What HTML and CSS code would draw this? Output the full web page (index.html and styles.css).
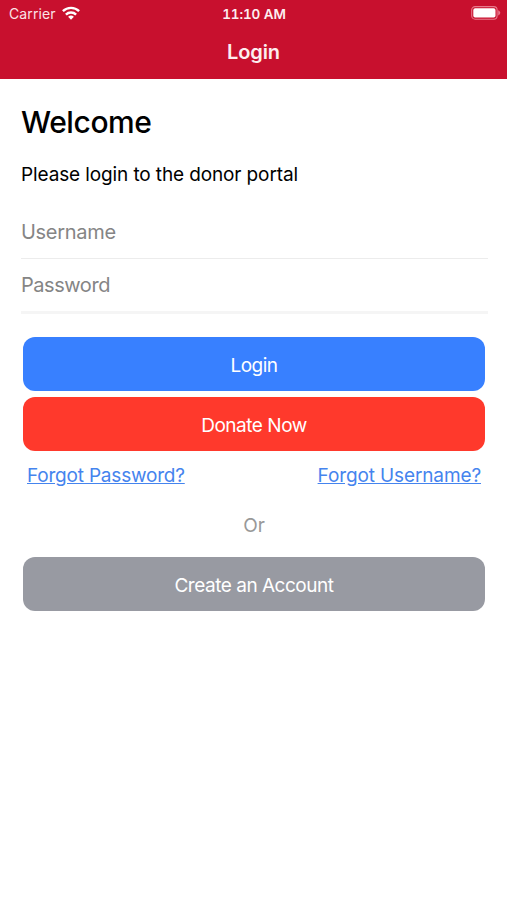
FILE: index.html
```html
<!DOCTYPE html>
<html lang="en">
<head>
<meta charset="utf-8">
<title>Login</title>
<link rel="stylesheet" href="styles.css">
</head>
<body>
<header class="top">
  <div class="status">
    <div class="carrier"><span class="carrier-name">Carrier</span>
      <svg class="wifi" viewBox="0 0 18 14" width="18" height="14"><g fill="none" stroke="#fff" stroke-width="2.4"><path d="M.9 5.2a11.6 11.6 0 0 1 16.2 0"/><path d="M3.9 8.6a7.3 7.3 0 0 1 10.2 0"/></g><path fill="#fff" d="M6.1 10.8a4.2 4.2 0 0 1 5.8 0L9 13.7z"/></svg>
    </div>
    <span class="time">11:10 AM</span>
    <svg class="battery" viewBox="0 0 30 14" width="30" height="14"><rect x=".7" y=".6" width="25.4" height="12.6" rx="3.4" fill="none" stroke="#e8798c" stroke-width="1.1"/><rect x="2.3" y="2.3" width="22.2" height="9.2" rx="1.8" fill="#fff"/><path d="M27.2 4.3c2.7 1.2 2.7 4 0 5.2z" fill="#e8798c"/></svg>
  </div>
  <div class="title"><span>Login</span></div>
</header>
<main class="content">
  <h1>Welcome</h1>
  <p class="intro">Please login to the donor portal</p>
  <div class="field"><span class="user">Username</span></div>
  <div class="field last"><span class="pass">Password</span></div>
  <div class="actions">
    <button class="btn blue">Login</button>
    <button class="btn red">Donate Now</button>
    <div class="links"><a class="l-pass">Forgot Password?</a><a class="l-user">Forgot Username?</a></div>
    <div class="or">Or</div>
    <button class="btn gray">Create an Account</button>
  </div>
</main>
</body>
</html>
```
FILE: styles.css
```css
* { box-sizing: border-box; }
body { margin: 0; background: #fff; color: #000; font-family: Inter, "Liberation Sans", sans-serif; font-size: 19px; }
.top { height: 79px; background: #c8102e; color: #fff; }
.status { height: 27px; padding: 0 6px 0 9px; display: grid; grid-template-columns: 1fr auto 1fr; align-items: center; font-size: 14px; }
.carrier { display: flex; align-items: center; gap: 6px; }
.carrier-name { letter-spacing: .1px; color: #fbe3e7; }
.wifi { position: relative; top: -1px; }
.time { margin-right: 2px; font-weight: 600; font-size: 13.5px; letter-spacing: -.1px; font-feature-settings: "tnum"; color: #fdeef0; }
.battery { justify-self: end; position: relative; top: -.5px; }
.title { height: 50px; line-height: 51px; text-align: center; font-size: 20px; font-weight: 600; letter-spacing: -.1px; color: #fdeef0; }
.content { padding: 23px 19px 0 21px; }
h1 { margin: 0; height: 40px; line-height: 40px; font-size: 30px; font-weight: 500; letter-spacing: -.42px; }
.intro { margin: 22px 0 20px; height: 22px; line-height: 22px; letter-spacing: -.12px; }
.field { height: 53px; line-height: 53px; border-bottom: 1px solid #ececec; color: #858585; font-size: 20px; }
.field.last { height: 55px; line-height: 53px; border-bottom: 3px solid #f5f5f5; }
.user { letter-spacing: -.3px; }
.pass { letter-spacing: -.45px; }
.actions { padding: 23px 3px 0 2px; }
.btn { display: block; width: 100%; height: 54px; margin: 0 0 6px; padding: 2px 0 0; border: 0; border-radius: 12px; color: #fff; font: inherit; letter-spacing: -.48px; }
.blue { background: #3880ff; }
.red { background: #ff392c; }
.gray { background: #989aa2; }
.links { display: flex; justify-content: space-between; height: 38px; line-height: 37px; padding: 0 4px; color: #4584ee; text-decoration: underline; }
.l-pass { letter-spacing: -.2px; }
.l-user { letter-spacing: -.12px; }
.or { height: 62px; line-height: 61px; text-align: center; color: #999; }
```
